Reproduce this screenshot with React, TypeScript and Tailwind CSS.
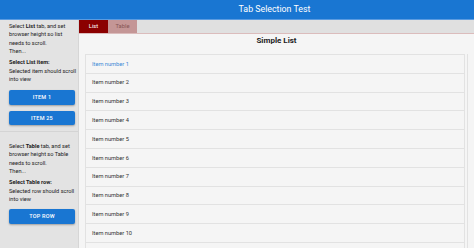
import React from "react";

const items = Array.from({ length: 12 }, (_, i) => `Item number ${i + 1}`);

function SideButton({ label }: { label: string }) {
  return (
    <button className="w-[66px] h-[14.5px] bg-[#1976d2] text-white text-[5.5px] font-medium tracking-[0.2px] rounded-[2px] shadow-[0_1px_2px_rgba(0,0,0,0.3)] flex items-center justify-center">
      {label}
    </button>
  );
}

export default function App() {
  return (
    <div
      className="w-[474px] h-[248px] overflow-hidden flex flex-col bg-[#f5f5f5]"
      style={{ fontFamily: "Roboto, 'Liberation Sans', sans-serif" }}
    >
      <header className="h-[20px] shrink-0 bg-[#1976d2] flex border-b border-[#5b9be0]">
        <div className="w-[79px]" />
        <div className="flex-1 flex items-center justify-center text-white text-[8.8px] pr-[4px]">
          Tab Selection Test
        </div>
      </header>
      <div className="flex flex-1 min-h-0">
        <aside className="w-[79px] shrink-0 bg-[#e3e3e3] border-r border-[#d6d6d6] flex flex-col pl-[9px] pr-[1px] pt-[2px] text-[5.6px] leading-[8.4px] text-[#222]">
          <p>
            Select <b>List</b> tab, and set browser height so list needs to scroll.
          </p>
          <p>Then...</p>
          <p className="mt-[2.6px] font-bold">Select List item:</p>
          <p>Selected item should scroll into view</p>
          <div className="mt-[7px] flex flex-col gap-[6px]">
            <SideButton label="ITEM 1" />
            <SideButton label="ITEM 25" />
          </div>
          <div className="mt-[6px] -ml-[9px] -mr-[1px] border-t border-[#d4d4d4]" />
          <p className="mt-[9.5px]">
            Select <b>Table</b> tab, and set browser height so Table needs to scroll.
          </p>
          <p>Then...</p>
          <p className="mt-[2.6px] font-bold">Select Table row:</p>
          <p>Selected row should scroll into view</p>
          <div className="mt-[6px]">
            <SideButton label="TOP ROW" />
          </div>
        </aside>
        <main className="flex-1 min-w-0 flex flex-col">
          <div className="h-[14px] shrink-0 bg-[#e0e0e0] border-b-[1.5px] border-[#dbbcbc] flex">
            <div className="w-[29px] bg-[#8b0000] text-white text-[5.8px] flex items-center justify-center">
              List
            </div>
            <div className="w-[29px] bg-[#c49696] text-[#875555] text-[5.8px] flex items-center justify-center">
              Table
            </div>
          </div>
          <div className="h-[20px] shrink-0 flex items-start justify-center pt-[2px] text-[8px] leading-[10px] font-bold text-[#222]">
            Simple List
          </div>
          <div className="ml-[6px] mr-[6px] border-r border-[#e2e2e2] pr-[2px]">
            <ul className="border-t border-r border-l border-[#e2e2e2]">
              {items.map((t, i) => (
                <li
                  key={t}
                  className={`h-[18.8px] flex items-center pl-[6px] text-[5.7px] border-b border-[#e2e2e2] ${
                    i === 0 ? "text-[#3d8ad6]" : "text-[#333]"
                  }`}
                >
                  {t}
                </li>
              ))}
            </ul>
          </div>
        </main>
      </div>
    </div>
  );
}
